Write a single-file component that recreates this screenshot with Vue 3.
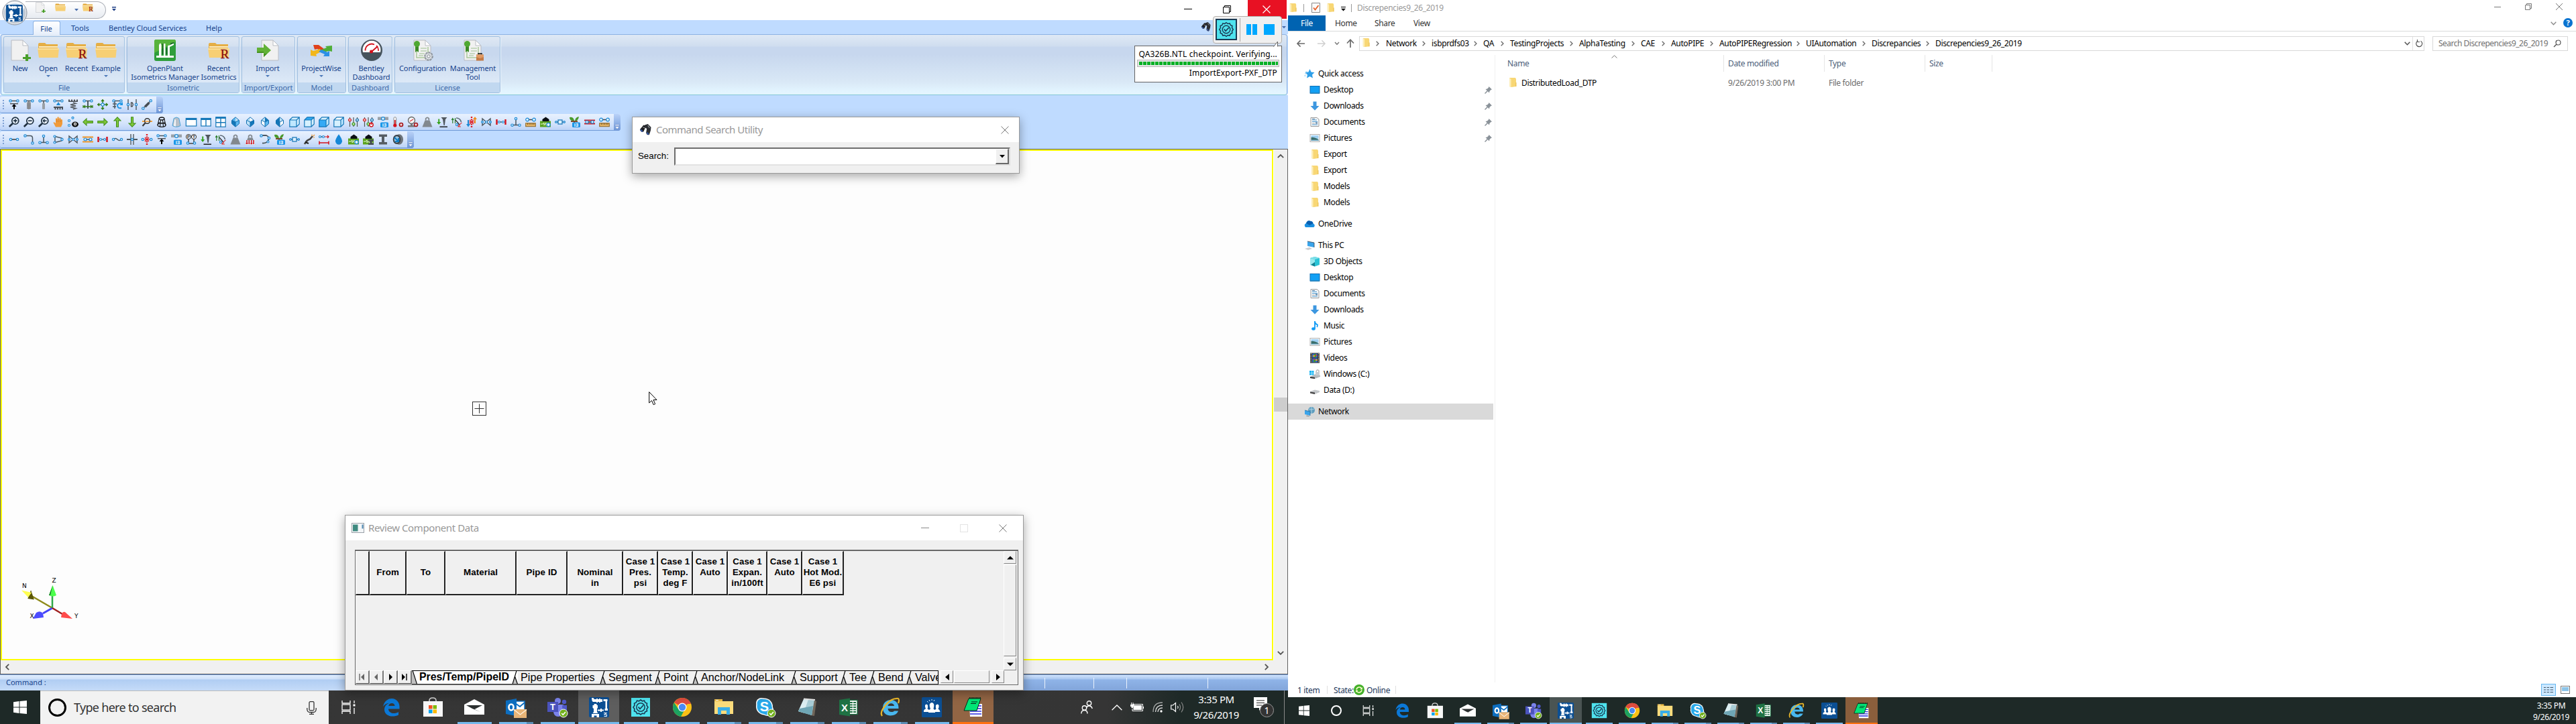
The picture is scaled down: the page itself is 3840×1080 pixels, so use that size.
<script setup>
const ring = (x, y, r = 1.7) =>
  `<circle cx="${x}" cy="${y}" r="${r}" fill="#e3f5ff" stroke="#1e8ad6" stroke-width="1.2"/>`
const ln = (d, c = '#4a565f', w = 1.5) => `<path d="${d}" fill="none" stroke="${c}" stroke-width="${w}"/>`
const fl = (d, c = '#4a565f') => `<path d="${d}" fill="${c}"/>`
const tx = (t, x, y, s, c, extra = '') =>
  `<text x="${x}" y="${y}" font-size="${s}" fill="${c}" text-anchor="middle" font-weight="bold" font-family="Liberation Sans, sans-serif" ${extra}>${t}</text>`

const pipeTop = ln('M2 2.5H14') + ring(2.6, 2.5) + ring(13.4, 2.5)
const cube = (top, front, side) =>
  `<path d="M.8 5 5 .8H15.2L11 5Z" fill="${top}"/><path d="M.8 5H11V15.2H.8Z" fill="${front}"/><path d="M11 5 15.2.8V11L11 15.2Z" fill="${side}"/>` +
  ln('M.8 5 5 .8H15.2V11L11 15.2H.8ZM.8 5H11V15.2M11 5 15.2.8', '#1477b8', 1.2)
const iso = (a, b, c, d) =>
  fl('M8 .8 13 8 8 15.2 3 8Z', '#fff') + fl('M8 .8 3 5.5 8 8Z', a) + fl('M8 .8 13 5.5 8 8Z', b) +
  fl('M3 5.5 8 8V15.2L3 10.5Z', c) + fl('M13 5.5 8 8V15.2L13 10.5Z', d) +
  ln('M8 .8 13.5 5.5V10.5L8 15.2 2.5 10.5V5.5ZM8 8V15M8 8 3 5.5M8 8l5-2.5', '#0c6cb0', 1)
const mag = (inner) =>
  `<circle cx="9.8" cy="6.2" r="5" fill="#eaf3ff" stroke="#1f3040" stroke-width="1.7"/>` + ln('M6 10 .8 15', '#1f3040', 2.6) + inner
const info = '<rect x="4" y="8.5" width="12" height="7.5" rx="1.5" fill="#1d96e8"/>' + tx('i3', 10, 15, 7.5, '#fff')
const weight = fl('M4.5 5.5H11.5L15.5 15.5H.5Z', '#82888e') + ln('M5.7 5.5V2.8Q8-.2 10.3 2.8V5.5', '#82888e', 1.8)
const nail = fl('M6.5 1H15.5L13 4 11.8 13H10.5L9 4Z', '#51585f') + ln('M4.5 15.2H16', '#111', 1.4) + fl('M2.3 3.5H4.2V8H6.2L3.2 12 .2 8H2.3Z', '#35a11c')
const wheel = ln('M1.8 10V3M.2 5 1.8 2.6 3.4 5M5.5 10V2', '#287d28', 1.2) + ln('M7 2Q13 2 14.5 8', '#596670', 1.6) + ln('M6 5 12 12', '#333', 1.3) + ln('M15.5 9Q13 10 11 15M10 11v4h4', '#d33', 1.2) + ring(8, 12, 1.6)
const valve = ln('M2 3V13L14 3V13Z', '#4a565f', 1.4) + ring(2, 8, 1.4) + ring(14, 8, 1.4) + ring(8, 8, 1.5)
const flange = ln('M3 8H13', '#555', 1.3) + ln('M1.5 4V12M14.5 4V12', '#d3121c', 2.4) + ring(5, 8, 1.5) + ring(11, 8, 1.5)
const tee = ln('M2 12.5H14M8 12V4') + ring(8, 3) + ring(2.5, 12.7) + ring(13.5, 12.7)
const ruler = ln('M3 4.5H13', '#444') + ring(3, 4.5, 2.3) + ring(13, 4.5, 2.3) + '<rect x=".7" y="9.7" width="14.6" height="5" fill="#e2b468" stroke="#8a6425"/>' + ln('M3.5 10v2M6 10v2M8.5 10v2M11 10v2M13 10v2', '#6a4715', .8)
const house = '<rect y="6.5" width="16" height="9" fill="#5ba31f"/>' + fl('M3.5 7V4L8.5.5 13.5 4V7Z', '#0b0f14') + ln('M1 11h3l2-2v4l3-4v4h6', '#e9f7dc', 1)
const pbox = ln('M0 8H16') + '<rect x="5" y="5" width="6" height="6" fill="#dff1ff" stroke="#1e7ab8" stroke-width="1.3"/>' + ring(2, 8, 1.3) + ring(14, 8, 1.3)
const plant = fl('M0 1Q6 0 7 6H5Q0 6 0 1ZM14 0Q8 1 8 7Q13 6 14 0Z', '#4a9a2c') + ln('M2 7H12M7 7V12', '#7a4a2a', 1.8) + info
const bigInfo = '<rect y=".5" width="16" height="4.5" fill="#9aa1a8"/>' + ring(8, 3, 2.4) + info
const sliders = ln('M2.5 1V15M8 1V15M13.5 1V15', '#555', 1.2) +
  '<circle cx="2.5" cy="5" r="2" fill="#fbb" stroke="#c22" stroke-width="1.2"/><circle cx="8" cy="11" r="2" fill="#bdf5a0" stroke="#3a8a20" stroke-width="1.2"/><circle cx="13.5" cy="5" r="2" fill="#bde" stroke="#1e6fa8" stroke-width="1.2"/>'
const redO = '<circle cx="13" cy="12" r="2.5" fill="#f4dede" stroke="#a3161c" stroke-width="1.7"/>'
const reddots = ln('M8 0V16', '#e0161c', 2.4).replace('/>', ' stroke-dasharray="2 1.5"/>') + ln('M3 8H13M5 5l6 6M11 5l-6 6', '#e0161c', 1.2)
const arrow = (rot) => `<g transform="rotate(${rot} 8 8)">` + fl('M0 8 6.5 1.8V6H15.8V10H6.5V14.2Z', '#3d8a14') + fl('M1.4 8 5.6 4V7H14.8V9H5.6V12Z', '#7fc63c') + '</g>'
const zig = (y) => `M8 ${y}l4 1.4-8 1.8 8 1.8-8 1.8 8 1.8-4 1.4`

const glyphs = {
  support: pipeTop + ln('M2 6.8H14', '#111', 1) + fl('M8 7 4.5 11H7V15H9V11H11.5Z', '#000'),
  spring: pipeTop + ln('M5 5.5h6M5 7.5h6M5 9.5h6M5 11.5h6M5 13.5h6', '#777', 1.4) + ln('M8 3V15', '#888', 2),
  rod: pipeTop + ln('M8 3V7', '#555') + '<rect x="6" y="6" width="4" height="9" rx="1" fill="#9a9fa4"/>',
  base: pipeTop + fl('M8 4 4.8 9H11.2Z', '#1e8ad6') + fl('M1 11H15V15.5H13V13H11.5V15.5H9.5V13H8V15.5H6V13H4.5V15.5H2.5V13H1Z', '#4a4f55'),
  springtop: fl('M1 0.5H3V2.5H5V.5H7V2.5H9V.5H11V2.5H13V.5H15V4H1Z', '#4a4f55') + ln(zig(5), '#5a6066', 1.6),
  teearr: pipeTop + ln('M8 3V14', '#4a565f', 2) + ln('M1 11H15M1 9v4M15 9v4M4 9l-2 2 2 2M12 9l2 2-2 2', '#357f1c', 1.3),
  cross: ln('M8 0V16M0 8H16M6 3l2-2 2 2M6 13l2 2 2-2M3 6 1 8l2 2M13 6l2 2-2 2', '#357f1c', 1.5) + ring(8, 8, 2.2),
  rotate: pipeTop + ln('M4 3V14M1 7h6M1 11h5') + ln('M14.5 7Q10 4.500 8 9Q8.500 14.500 14 13', '#1e96e6', 2) + fl('M16 4V9H11Z', '#1e96e6'),
  damper: ln('M2 0V16M14 0V16', '#4a565f', 1.4) + ring(2, 8) + ring(14, 8) + ln('M6.500 5V11H8Q10.500 8 8 5Z', '#333', 1.2),
  diag: ln('M2 14 14 2') + fl('M4 10 10 4 12.500 6.500 6.500 12.500Z', '#454d54') + ring(2.300, 13.700) + ring(13.700, 2.300),
  zoomin: mag(ln('M7 6.200h5.600M9.800 3.400v5.600', '#1f3040', 1.7)),
  zoomout: mag(ln('M7 6.200h5.600', '#1f3040', 1.7)),
  zoomprev: mag(ln('M7 6.200h5.600M9.500 4 7.500 6.200l2 2.200', '#1f3040', 1.5)),
  hand: fl('M4 15.500 0.500 9Q1 7.500 3 9L4 10V3Q5 1.500 6 3V7.500L6.500 1Q7.700-.5 8.700 1V7.500L9.500 2Q10.700 1 11.500 2.500V8L12.200 4Q13.500 3.500 14 5V11L12 15.500Z', '#f09a3a') + ln('M6 4v4M8.700 3v5M11.500 4v4', '#c96d10', .6),
  eye: ring(2, 6, 1.500) + ring(7.500, 1.800, 1.500) + ring(2, 13, 1.500) + '<ellipse cx="11" cy="11.500" rx="5" ry="4" fill="#111"/><circle cx="11" cy="11" r="2.200" fill="#fff"/><circle cx="11" cy="11" r="1.100" fill="#111"/>',
  left: arrow(0), right: arrow(180), up: arrow(90), down: arrow(270),
  magpipe: ln('M1 7H16', '#f09628', 1.800) + '<circle cx="8.500" cy="6.500" r="3.800" fill="#eaf3ff" stroke="#333" stroke-width="1.500"/>' + ln('M5.500 9.500 1.500 14', '#333', 2) + ln('M5.500 7h6', '#f09628', 1.500),
  wirecyl: '<ellipse cx="8" cy="3" rx="3.800" ry="2" fill="none" stroke="#111" stroke-width="1.300"/><ellipse cx="8" cy="12.500" rx="6" ry="2.800" fill="none" stroke="#111" stroke-width="1.300"/>' + ln('M4.200 3 2 12.500M11.800 3 14 12.500M6.500 4.800 5.500 15M9.500 4.800l1 10M3 8.500q5 3 10 0', '#111', 1.100),
  solidcyl: '<path d="M4.200 2.500Q8-.5 11.800 2.500L14 13.500Q8 17 2 13.500Z" fill="#b9c0c8" stroke="#4aa3d8"/>' + fl('M5.500 4 4 13.500Q5.500 14.500 7 14.500V4.500Z', '#f3f6f8'),
  win1: '<rect x=".3" y="2.500" width="15.500" height="11.500" fill="#fff" stroke="#1477b8" stroke-width="1.200"/>' + fl('M0 2H16V5H0Z', '#1477b8'),
  win2: '<rect x=".8" y="2.500" width="14.400" height="11.500" fill="#fff" stroke="#1477b8" stroke-width="1.200"/>' + fl('M.5 2H15.500V5H.5ZM7.300 5H8.700V14H7.300Z', '#1477b8'),
  win4: '<rect x=".8" y=".8" width="14.400" height="14.400" fill="#fff" stroke="#1477b8" stroke-width="1.200"/>' + fl('M.5.5H15.500V3H.5ZM7.300 3H8.700V15H7.300ZM1 8H15V9.500H1Z', '#1477b8'),
  isoA: iso('#5db7ee', '#bfe3f8', '#1477b8', '#5db7ee'), isoB: iso('#bfe3f8', '#fff', '#bfe3f8', '#1477b8'),
  isoC: iso('#bfe3f8', '#1477b8', '#fff', '#5db7ee'), isoD: iso('#1477b8', '#bfe3f8', '#1477b8', '#fff'),
  cubeA: cube('#d6f1ff', '#bfe8ff', '#d6f1ff'), cubeB: cube('#2fa8f0', '#d6f1ff', '#d6f1ff'),
  cubeC: cube('#d6f1ff', '#35aaf5', '#bfe8ff'), cubeD: cube('#fff', '#d6f1ff', '#bfe8ff'),
  sliders, sliderspw: sliders + '<circle cx="12.500" cy="12.300" r="2.700" fill="#fff" stroke="#d01820" stroke-width="1.500"/>' + ln('M12.500 8v4', '#d01820', 1.400),
  bigInfo, thermo: '<rect x="2" y=".7" width="3.600" height="11" rx="1.800" fill="#fff" stroke="#888"/><circle cx="3.800" cy="13" r="2.600" fill="#d3121c"/>' + ln('M3.800 5V12', '#d3121c', 1.800) + redO,
  gauge: '<circle cx="6.500" cy="5.500" r="5" fill="#f4f6f7" stroke="#666" stroke-width="1.300"/>' + ln('M4 7 9 4', '#d33', 1.200) + fl('M5 11h3v2h3v2.500H1V13h4Z', '#777') + redO,
  weight, nail, wheel,
  dyn: reddots + fl('M2 5H4V11H6L3 15.500 0 11H2Z', '#1e8ad6') + fl('M13 0 16 4H14V10H12V4H10Z', '#f08a1c'),
  valve, flange, tee, ruler, house: house + ring(12.500, 12, 2.600), pbox, plant,
  redpipe: ln('M0 5.500H16M0 10.500H16', '#c82028', 2) + ln('M3 8H13', '#333') + ring(4, 8, 2) + ring(12, 8, 2),
  pipe: ln('M1 8H15', '#555', 1.800) + ring(3, 8) + ring(13, 8),
  elbow: ln('M3 2.500H10Q13.500 2.500 13.500 6V13') + ring(2.500, 2.500) + ring(13.500, 13.500),
  reducer: ln('M3 3.500V12.500L13 10V6Z', '#4a565f', 1.400) + ring(2.500, 3.500, 1.500) + ring(2.500, 12.500, 1.500) + ring(13.500, 8, 1.600),
  bellow: ln('M0 4.500H16M0 11.500H16', '#f09628', 2) + ln('M2 8H14') + ring(4, 8, 2) + ring(12, 8, 2),
  tilde: ln('M2 8Q5 5 8 8T14 8') + ring(2, 8, 1.600) + ring(14, 8, 1.600),
  greycross: ln('M6 0V16M10 0V16', '#7b858d', 2) + ln('M0 8H16', '#4a565f', 2) + ring(8, 8, 1.600),
  reddots: reddots + ring(1.800, 8) + ring(14.200, 8),
  pt: '<circle cx="4" cy="4" r="3.600" fill="#eef3f8" stroke="#333"/><circle cx="12" cy="4" r="3.600" fill="#eef3f8" stroke="#333"/>' + tx('P', 4, 6.300, 6, '#222') + tx('T', 12, 6.300, 6, '#222') + ln('M4 8v6M12 8v6M4 14h8', '#444') + ring(3, 13.500) + ring(13, 13.500),
  weightred: weight + fl('M1 9H15V16H1Z', '#dbe7f5') + ln('M3 9v6M6.300 9v6M9.700 9v6M13 9v6', '#d3121c', 1.500) + ln('M1.500 13l1.500 2 1.500-2M8 13.500l1.700 1.700 1.500-2', '#d3121c', 1),
  bend: ln('M3 2H10Q15 4 13 9Q11 14 4 13.500', '#4a565f', 1.800) + ring(2.500, 2.500) + ring(14, 6) + ring(12.500, 11.500, 1.500),
  pen: ln('M1 15Q4 9 9 7.500L13 3', '#444', 2.600) + ln('M2 12l5 2', '#222', 2.400) + ln('M12 3V.5M14 3l2-2M14 5h2', '#f09628', 1.100),
  rulerred: ln('M1 4H8', '#555') + ring(2, 4, 1.500) + ring(7, 4, 1.500) + ln('M9 4h6M13 2l2 2-2 2', '#d3121c', 1.200) + ln('M.5 13H15.500M1 10.500v5M15 10.500v5', '#d3121c', 1.500),
  drop: fl('M8 .3Q13.500 8 13 11Q12 15.700 8 15.700T3 11Q2.500 8 8 .3Z', '#1688d8'),
  houseI: house + fl('M8 8H16V10.500H13.500V13.500H16V16H8V13.500H10.500V10.500H8Z', '#444b52'),
  ibeam: fl('M2 .5H14V4H10V12H14V15.500H2V12H6V4H2Z', '#565d64'),
  disc: '<ellipse cx="10" cy="8" rx="6" ry="7.700" fill="#6d747b"/><ellipse cx="6.500" cy="8" rx="5.800" ry="7" fill="#3c4349"/><ellipse cx="6.500" cy="8" rx="3.800" ry="4.800" fill="#9cc8e6"/>' + ln('M3 5 9 11M9 6V11H4', '#0c7cc4', 2.200)
}
const row1 = 'support spring rod base springtop teearr cross rotate damper diag'.split(' ')
const row2 = 'zoomin zoomout zoomprev hand eye left right up down magpipe wirecyl solidcyl win1 win2 win4 isoA isoB isoC isoD cubeA cubeB cubeC cubeD sliders sliderspw bigInfo thermo gauge weight nail wheel dyn valve flange tee ruler house pbox plant redpipe ruler'.split(' ')
const row3 = 'pipe elbow tee reducer valve bellow flange tilde greycross reddots support bigInfo pt nail wheel weight weightred bend plant pbox pen rulerred drop house houseI ibeam disc'.split(' ')
const toolbars = [row1, row2, row3]

/* 32px ribbon icons */
const folder = fl('M1 7Q1 5 3 5H11L13 7H30V16H1Z', '#e5ae45') + fl('M0 13H32L30.500 27H2Z', '#f7cf74') + fl('M2 10H30V12H2Z', '#fdecc0') + fl('M0 13H32V15H0Z', '#fbdf9b')
const bigR = `<text x="25" y="28" font-size="19" fill="#8a0f0f" stroke="#8a0f0f" stroke-width=".4" text-anchor="middle" font-family="Liberation Serif, serif">R</text>`
const page = '<path d="M3 1H20L28 9V31H3Z" fill="#f1f1f1" stroke="#b9bcc2"/><path d="M20 1V9H28Z" fill="#fff" stroke="#b9bcc2"/>'
const cert = page + ln('M7 5V27H24V11', '#a9c79b', 1.500) + fl('M5 13V19L7.500 17 10 19V9H5Z', '#3c8a28') + '<circle cx="7.500" cy="6.500" r="4.500" fill="#4fa832"/>' + ln('M13 13h9M13 17h9M11 21h8M10 24h7', '#9cbf90', 1)
const big = {
  new: page + fl('M24 22H28V26H32V29H28V32H24V29H20V26H24Z', '#4a9f2a'),
  folder, folderR: folder + bigR,
  plant: '<rect width="32" height="32" rx="3" fill="#2f9e3c"/>' + fl('M0 3Q0 0 3 0H29Q32 0 32 3L0 20Z', '#57b33c') + fl('M7 24V8L9 5 10.500 8V24ZM14 24V6H16.500V24ZM20 24V10Q20 8 23 8.500L29 5.500V8L23 11V24ZM3 24H29V27H3Z', '#fff') + ln('M12.500 6V22M18.500 12V22M24 6l5-1', '#175f24', 1.500),
  import: '<g transform="translate(4 0)">' + page + '</g>' + fl('M0 12H10V6L21 16 10 26V20H0Z', '#62b136') + fl('M0 18H10V21L15 21 10 26V20H0Z', '#44911f'),
  pw: fl('M4 8H12L20 14 18 18 10 14 6 15Z', '#e0401a') + fl('M0 24V15L4 17 14 14 16 18 8 22 9 25Z', '#f3b71a') + fl('M32 9V18L28 17 18 19 14 16 24 12 22 10Z', '#4fae36') + fl('M28 25H19L21 22 12 18 16 15 25 19 28 17Z', '#2a8fe6'),
  gauge: '<circle cx="16" cy="16" r="16" fill="#46535c"/><path d="M3 19A13.500 13.500 0 1 1 29 19Z" fill="#fff"/>' + ln('M6.500 16.500A9.500 9.500 0 0 1 20 7.500', '#d3121c', 1.800) + ln('M23 9A10 10 0 0 1 26 17', '#d3121c', 1.600) + ln('M16 18 25 10', '#d3121c', 2) + '<circle cx="15.500" cy="18" r="2.500" fill="#d3121c"/>',
  config: cert + '<circle cx="25" cy="25" r="6" fill="#d5d9dd" stroke="#858c94" stroke-width="1.500" stroke-dasharray="3 1.500"/><circle cx="25" cy="25" r="5" fill="#dfe2e6" stroke="#9aa1a8"/><circle cx="25" cy="25" r="2.200" fill="#f5f6f7" stroke="#858c94"/>',
  mgmt: cert + '<rect x="21" y="22.500" width="11" height="9" fill="#c47a45"/>' + fl('M21 22.500H32V26L26.500 28 21 26Z', '#e09a63') + ln('M24 22V21H29V22', '#111', 1.500)
}
const groups = [
  { name: 'File', w: 181, items: [{ t: 'New', i: 'new', w: 42 }, { t: 'Open', i: 'folder', w: 42, a: 1 }, { t: 'Recent', i: 'folderR', w: 42 }, { t: 'Example', i: 'folder', w: 46, a: 1 }] },
  { name: 'Isometric', w: 168, items: [{ t: 'OpenPlant', t2: 'Isometrics Manager', i: 'plant', w: 106 }, { t: 'Recent', t2: 'Isometrics', i: 'folderR', w: 54 }] },
  { name: 'Import/Export', w: 80, items: [{ t: 'Import', i: 'import', w: 76, a: 1 }] },
  { name: 'Model', w: 73, items: [{ t: 'ProjectWise', i: 'pw', w: 70, a: 1 }] },
  { name: 'Dashboard', w: 66, items: [{ t: 'Bentley', t2: 'Dashboard', i: 'gauge', w: 62 }] },
  { name: 'License', w: 158, items: [{ t: 'Configuration', i: 'config', w: 76 }, { t: 'Management', t2: 'Tool', i: 'mgmt', w: 74 }] }
]

/* 30px application icons */
const gearD = 'M15 4l2.500 1.800 3-.6 1.200 2.800 2.800 1.200-.4 3L26 15l-1.900 2.700.4 3-2.800 1.200-1.200 2.800-3-.6L15 26l-2.500-1.900-3 .6-1.200-2.800-2.800-1.200.4-3L4 15l1.900-2.800-.4-3 2.800-1.200L9.500 5.200l3 .6Z'
const gear = '<rect x="1" y="1" width="28" height="28" fill="#4fe3ee"/>' + ln(gearD, '#1b3a54', 1.600) + '<circle cx="15" cy="15" r="6.200" fill="none" stroke="#1b3a54" stroke-width="1.500"/>' + ln('M11.500 14.500 14 17.500 19 12', '#1b3a54', 1.800)
const autopipe = '<rect width="30" height="30" rx="2" fill="#0b4f94"/>' +
  fl('M4 1H6.500L8 3H11V2H13V3H15V2H17V3H20V7H17V8H15V7H13V8H11V7H6Q4 6 4 1ZM21.500 3H27.500V6H21.500ZM24.500 6H27V18H24.500ZM23.500 17H28V20H23.500ZM17 17H19V22H17ZM19 18.500H22V20.500H19ZM13 18.500H17V20.500H13ZM7.500 10H11.500V12H13V16L12 17V22L13.500 24H5.500L7 22V17L5.500 16V12H7.500ZM4 25H15V30H11.500V27.500H7.500V30H4Z', '#fff') + ln('M22 23.500h4.500l-4 2.500h4v2.500h-4', '#fff', 1)
const ok = (x, y) => `<circle cx="${x}" cy="${y}" r="6" fill="#72b01d" stroke="#fff" stroke-width="1"/>` + ln(`M${x - 2.800} ${y}l2 2.200 3.800-4.200`, '#fff', 1.600)
const apps = {
  task: ln('M4 5V9H16V5M4 25V21H16V25', '#fff', 1.300) + '<rect x="4" y="11" width="12" height="8" fill="none" stroke="#fff" stroke-width="1.300"/>' + ln('M22 5V9M22 16V25', '#fff', 1.300) + fl('M20.500 10.500H23.500V13.500H20.500Z', '#fff'),
  edge: fl('M3 14C5 5 11 2 16 2C23 2 27.500 8 27.500 14V17.500H11C11 24 20 26 26 22V26.500C17 31 5 28 5 18.500C5 13 9 9.500 13 8.500C8 9 5 11 3 14ZM11.200 13H20.500C20.500 7.500 12 7.500 11.200 13Z', '#0b78d7'),
  store: ln('M10 7V5Q10 1 15 1T20 5V7', '#d8d8d8', 1.500) + fl('M1 6H30V29H1Z', '#f7f7f7') + fl('M9 12H14.500V17.500H9Z', '#f25022') + fl('M15.500 12H21V17.500H15.500Z', '#7fba00') + fl('M9 18.500H14.500V24H9Z', '#00a4ef') + fl('M15.500 18.500H21V24H15.500Z', '#ffb900'),
  mail: fl('M0 11 15 3 30 11V26H0Z', '#fff') + fl('M3 12H27L15.500 18 24 22 12 17Z', '#2b2f2f'),
  outlook: '<rect x="13" y="6" width="15" height="13" fill="#fff" stroke="#0d6ec0" stroke-width="1.500"/>' + ln('M14 9l7 5 7-6', '#0d6ec0', 2) + fl('M0 5 16 2V28L0 25Z', '#0d6ec0') + '<ellipse cx="8" cy="15" rx="3.500" ry="4.500" fill="none" stroke="#fff" stroke-width="2.600"/>' + fl('M12 18H31V31H12Z', '#e8b477') + ln('M12 18.500 21.500 26 31 18.500', '#fff3e2', 1.300),
  teams: '<circle cx="15.500" cy="5.500" r="4.500" fill="#7b83eb"/><circle cx="25" cy="7" r="3.200" fill="#5059c9"/>' + fl('M10 11H24V22Q22 29 16 29T9 22Z', '#7b83eb') + fl('M22 12H29V21Q28 25 23 24Z', '#5059c9') + fl('M0 7H16V22H0Z', '#4b53bc') + tx('T', 8, 19, 13, '#fff') + ok(24, 24),
  pipe: autopipe, gear,
  chrome: '<circle cx="15" cy="15" r="14" fill="#fbc116"/><path d="M15 15 2.900 8A14 14 0 0 1 27.100 8Z" fill="#dd4b3e"/><path d="M15 1A14 14 0 0 1 28 10H15Z" fill="#dd4b3e"/><path d="M2.900 8A14 14 0 0 0 13 28.900L19 18 9.500 18Z" fill="#1ca261"/><circle cx="15" cy="15" r="6.500" fill="#fff"/><circle cx="15" cy="15" r="5.200" fill="#4a8af4"/>',
  files: fl('M1 3H13V7H1Z', '#e8b843') + fl('M1 6H29V25H1Z', '#fbdc7c') + fl('M3 4H7V5H3Z', '#fff') + fl('M6 15H24V26H19V20H11V26H6Z', '#3aaee8'),
  skype: '<circle cx="9" cy="9" r="8" fill="#fff"/><circle cx="18" cy="19" r="9" fill="#fff"/><circle cx="13.500" cy="14" r="12.500" fill="#fff"/><circle cx="9.500" cy="9.500" r="7" fill="#28a8ea"/><circle cx="17.500" cy="18.500" r="8" fill="#28a8ea"/><circle cx="13.500" cy="14" r="11" fill="#28a8ea"/>' + tx('S', 13.500, 21, 20, '#fff') + ok(24, 24),
  notes: fl('M24 4 29 6 26 28 20 27Z', '#70665a') + fl('M10 3 26 4 22 27 2 21Z', '#a9cdd6') + fl('M10 3 17 3.500 10 23.500 2 21Z', '#dceef2') + fl('M4 17 24 13 22 27 2 21Z', '#6fa6b5') + ln('M10 2.500 27 4', '#e8e8e8', 2),
  excel: '<rect x="14" y="4.500" width="14" height="21" fill="#fff" stroke="#1f7244" stroke-width="1.300"/>' + ln('M17 8H26M17 11.500H26M17 15H26M17 18.500H26M17 22H26', '#1f7244', 1.800) + ln('M21.500 5v20', '#fff', 1) + fl('M1 4 17 1.500V28.500L1 26Z', '#1f7244') + tx('X', 9, 20.500, 15, '#fff'),
  ie: fl('M4 16C4 8 10 4 16 4C23 4 28 9 27.500 17H11.500C12 23 19 23 21 20.500H27C24 30 4 31 4 16ZM11.500 13H21C20.500 8 12.500 8 11.500 13Z', '#49b7ee') + ln('M3 28Q-1 23 8 12T27 2Q29 4 27 9', '#eab72a', 2.200),
  people: '<rect width="30" height="30" rx="1.500" fill="#0b4f94"/>' + fl('M3 21Q3 18 6 17.500 4.500 14 5 12Q7 9 9 12 9.500 15 8.500 17.500L11 19 13 17.500Q11 12 12 10 15 6 18 10 19 13 17.500 17.500L19.500 19 21.500 17.500Q20.500 15 21 12 23.500 9 25.500 12 26 15 24.500 17.500 27 18.500 27.500 22H20V23H10V22H3Z', '#fff') + ln('M15 3v2M11 4l1 2M19 4l-1 2M8 6l1.500 1.500', '#fff', .9),
  green: fl('M9 10H28V29H10Z', '#fff') + ln('M16 13H27M16 17H27M10 21H27M10 25H27', '#2b2be0', 1.600) + '<path d="M8 2H26L20 20H1Z" fill="#00e676" stroke="#06281a"/>' + ln('M12 7h9M11 9.500h8', '#06281a', 1) + ln('M9 1h18', '#06281a', 2).replace('/>', ' stroke-dasharray="1 1"/>')
}
const taskItems = [
  { i: 'task' }, { i: 'edge' }, { i: 'store' }, { i: 'mail', on: 1 }, { i: 'outlook', on: 2 }, { i: 'teams', on: 1 }, { i: 'pipe', on: 1, act: 1 }, { i: 'gear', on: 1 },
  { i: 'chrome', on: 1 }, { i: 'files', on: 2 }, { i: 'skype', on: 2 }, { i: 'notes', on: 2 }, { i: 'excel', on: 2 }, { i: 'ie', on: 2 }, { i: 'people', on: 1 }, { i: 'green', alert: 1 }
]

/* 16px file explorer icons */
const ex = {
  folder: fl('M3 1H12L13 3V14L6 15 3 14Z', '#f8d775') + fl('M3 1 5.500 3V15L3 14Z', '#fdeeb9') + fl('M12 8h1.500v6H12Z', '#eec55a'),
  star: fl('M8.500 1 10.600 5.500 15.500 6 12 9.500 13 14.500 8.500 12 4 14.500 5 9.500 1.500 6 6.400 5.500Z', '#2f9fe8') + ln('M1 8h3M0 11h3M2 5h3', '#8fd0f5', 1),
  desktop: '<rect x="1" y="2.500" width="14" height="10.500" fill="#12a0f4" stroke="#0d6fb5" stroke-width="1"/>' + fl('M1 12.200H15V13.800H1Z', '#2a86bd'),
  down: fl('M5.500 1.500H10.500V8H14.500L8 14.800 1.500 8H5.500Z', '#3d97e0'),
  doc: '<path d="M2 1.500H11L14 4V14.500H2Z" fill="#f6f8f9" stroke="#9a9a9a"/>' + ln('M4 5h7M4 7.500h8M4 12h8', '#4a97cf', 1) + fl('M9 8.500h3v2H9ZM4 3h4v1H4Z', '#5a7fa0') + ln('M4 10h4', '#aaa', 1),
  pic: '<rect x="1" y="2.500" width="14" height="11" fill="#fff" stroke="#b0b0b0"/>' + fl('M2.500 4H13.500V9H2.500Z', '#9fd0f3') + fl('M2.500 7Q6 6 13.500 10V12H2.500Z', '#3b6e6a') + fl('M2.500 10.500H13.500V12H2.500Z', '#6ca4c0'),
  cloud: fl('M2 13Q-1 9 3 7Q5 1.500 10 4Q13 4 13.500 7.500Q17 9 15 12.500L14 13Z', '#1a8fe0') + fl('M3 7Q5 1.500 10 4Q13 4 13.500 7.500L8 10Z', '#0a5fb0'),
  pc: fl('M5 2 15 4V11L5 9Z', '#3aa4ea') + ln('M5 2 15 4V11', '#345', .8) + fl('M1 13 8 11 12 13 6 15Z', '#c9ccd0'),
  cube3: fl('M1 3 8 1 15 3V13L8 15.500 1 13Z', '#29c3d6') + fl('M1 3 8 5V15.500L1 13Z', '#9be8ee') + fl('M1 3 8 1 15 3 8 5Z', '#7fdfe8') + fl('M8 9V15.500L2 13Z', '#137f90'),
  music: ln('M8 1V12', '#119af5', 1.800) + '<ellipse cx="6" cy="12.500" rx="2.800" ry="2.200" fill="#119af5"/>' + ln('M8 2Q8.500 5 12 6.500Q12 9 11 10', '#119af5', 1.700),
  video: fl('M1 .5H15V15.500H1Z', '#333') + ln('M2.300 1V15M13.700 1V15', '#ddd', 1.200).replaceAll('/>', ' stroke-dasharray="1.200 1.200"/>') + fl('M4 1.500H12V7.500H4ZM4 8.500H12V14.500H4Z', '#3568c4') + fl('M7 2h3v5H7ZM6 11h3v3H6Z', '#3c9a38') + fl('M5 4h3v2H5ZM9 10h3v2H9Z', '#e0a020') + fl('M9 3h2v2H9ZM6 9.500h2v1.500H6Z', '#d33'),
  cdrive: fl('M0 3H3V6H0ZM3.500 3H6.500V6H3.500ZM0 6.500H3V9.500H0ZM3.500 6.500H6.500V9.500H3.500Z', '#18b4f2') + fl('M1 12 9 8 16 10V12L8 15 1 14Z', '#b5b9bd') + fl('M1 12 8 13V15L1 14Z', '#333') + ln('M10 7V4Q12 0 14 3V5', '#bbb', 1.500) + fl('M9 5H15V10H9Z', '#c8ccd0'),
  ddrive: fl('M1 10 8 7.500 15 9V11L8 14 1 12.500Z', '#c4c7ca') + fl('M1 10.500 8 11.500V14L1 12.500Z', '#444'),
  net: '<circle cx="11" cy="6" r="5" fill="#5f9ebf"/>' + ln('M7 4q4 2 8 0M11 1v10', '#bcdcea', .8) + fl('M1 6 9 8V14L1 12Z', '#3aa4ea') + ln('M1 6 9 8V14', '#2b6f9f', .8) + fl('M4 13.500 8 14.500V15.500L3 15Z', '#999')
}
const tree = [
  { t: 'Quick access', i: 'star', root: 1 }, { t: 'Desktop', i: 'desktop', pin: 1 }, { t: 'Downloads', i: 'down', pin: 1 }, { t: 'Documents', i: 'doc', pin: 1 }, { t: 'Pictures', i: 'pic', pin: 1 },
  { t: 'Export', i: 'folder' }, { t: 'Export', i: 'folder' }, { t: 'Models', i: 'folder' }, { t: 'Models', i: 'folder' },
  { t: 'OneDrive', i: 'cloud', root: 1 }, { t: 'This PC', i: 'pc', root: 1 }, { t: '3D Objects', i: 'cube3' }, { t: 'Desktop', i: 'desktop' }, { t: 'Documents', i: 'doc' },
  { t: 'Downloads', i: 'down' }, { t: 'Music', i: 'music' }, { t: 'Pictures', i: 'pic' }, { t: 'Videos', i: 'video' }, { t: 'Windows (C:)', i: 'cdrive' }, { t: 'Data (D:)', i: 'ddrive' },
  { t: 'Network', i: 'net', root: 1, sel: 1 }
]
const crumbs = [['Network', 68], ['isbprdfs03', 77], ['QA', 40], ['TestingProjects', 103], ['AlphaTesting', 92], ['CAE', 45], ['AutoPIPE', 72], ['AutoPIPERegression', 129], ['UIAutomation', 98], ['Discrepancies', 95], ['Discrepencies9_26_2019', 140]]
const gridCols = [['', 21], ['From', 55], ['To', 58], ['Material', 106], ['Pipe ID', 76], ['Nominal\nin', 83], ['Case 1\nPres.\npsi', 52], ['Case 1\nTemp.\ndeg F', 52], ['Case 1\nAuto', 52], ['Case 1\nExpan.\nin/100ft', 59], ['Case 1\nAuto', 52], ['Case 1\nHot Mod.\nE6 psi', 62]]
const sheetTabs = [['Pres/Temp/PipeID', 150], ['Pipe Properties', 131], ['Segment', 82], ['Point', 56], ['Anchor/NodeLink', 147], ['Support', 74], ['Tee', 43], ['Bend', 55], ['Valve', 40]]
const binoc = fl('M.5 7.500 5.500 1.500 8.500 2.500 7.500 6 5.500 10.500Q1.500 12.500.5 7.500Z', '#1d1f22') + fl('M7 1.500 11.500 0 16 4.500 15.500 9 13.500 15Q10.500 16.500 9 12.500L10 6.500 7.500 5Z', '#2b2e33') + fl('M1 7.500Q4 7.500 4.500 11 1.500 11.500 1 7.500ZM9.700 11.500Q12.500 11.500 13 15 10 15.500 9.700 11.500Z', '#3558a8') + ln('M4.500 4.500l2.500 1M11.500 2l2.500 3.500', '#9a9da2', 1)
const winLogo = 'M0 2.300 8.500 1.100V9.500H0ZM9.500 1 20 0V9.500H9.500ZM0 10.500H8.500V18.900L0 17.700ZM9.500 10.500H20V20L9.500 19Z'
</script>

<template>
  <div class="desktop">
    <section class="left">
      <header class="titlebar">
        <div class="qat">
          <svg class="q1" viewBox="0 0 32 32" v-html="big.new"></svg>
          <svg class="q2" viewBox="0 0 32 32" v-html="big.folder"></svg>
          <svg class="tri" viewBox="0 0 6 4"><path d="M0 0H6L3 3.500Z" fill="#4a6fae" /></svg>
          <svg class="q3" viewBox="0 0 32 32" v-html="big.folderR"></svg>
        </div>
        <svg class="qmore" viewBox="0 0 6 7"><path d="M0 0H6V1.500H0ZM0 3H6L3 6.500Z" fill="#1f3f86" /></svg>
        <div class="caps">
          <svg viewBox="0 0 12 12"><path d="M0 5.500H12" stroke="#000" /></svg>
          <svg viewBox="0 0 12 12"><path d="M.5 2.500H9.500V11.500H.5ZM2.500 2V.5H11.500V9.500H10" fill="none" stroke="#000" /></svg>
          <div class="close"><svg viewBox="0 0 12 12"><path d="M.5.5 11.500 11.500M11.500.5.5 11.500" stroke="#fff" stroke-width="1.200" /></svg></div>
        </div>
      </header>
      <nav class="tabs">
        <span class="tab on">File</span><span class="tab t2">Tools</span><span class="tab t3">Bentley Cloud Services</span><span class="tab t4">Help</span>
        <svg class="bin" viewBox="0 0 16 16" v-html="binoc"></svg>
        <svg class="tri tabtri" viewBox="0 0 6 4"><path d="M0 0H6L3 3.500Z" fill="#4a6fae" /></svg>
      </nav>
      <div class="ribbon">
        <div v-for="g in groups" :key="g.name" class="group" :style="{ width: g.w + 'px' }">
          <div class="gitems">
            <div v-for="it in g.items" :key="it.t" class="gitem" :style="{ width: it.w + 'px' }">
              <svg viewBox="0 0 32 32" v-html="big[it.i]"></svg>
              <span>{{ it.t }}</span>
              <span v-if="it.t2">{{ it.t2 }}</span>
              <i v-if="it.a"></i>
            </div>
          </div>
          <div class="gname">{{ g.name }}</div>
        </div>
      </div>
      <div class="bars">
        <div v-for="(r, k) in toolbars" :key="k" class="bar">
          <div class="grip"></div>
          <svg v-for="(n, j) in r" :key="j" viewBox="0 0 16 16" v-html="glyphs[n]"></svg>
          <div class="more"><svg viewBox="0 0 6 7"><path d="M0 0H6V1.500H0ZM0 3H6L3 6.500Z" fill="#fff" stroke="#5c7fc0" stroke-width=".4" /></svg></div>
        </div>
      </div>
      <main class="view">
        <div class="vrow">
          <div class="canvas">
            <svg class="axes" viewBox="0 0 100 75">
              <g stroke-width="3.500"><path d="M47 46 16 28" stroke="#8e8a1a" stroke-width="2.500" /><path d="M47 46 33 54" stroke="#4444f8" stroke-width="3" /><path d="M47 46V27" stroke="#2fa84a" stroke-width="2.500" /><path d="M47 46 62 55" stroke="#a02020" stroke-width="2.500" /></g>
              <path d="M15 23 18 32 12 31Z" fill="#5a5608" stroke="#5a5608" stroke-width="2.500" />
              <path d="M1 19.500 16 23 11 30Z" fill="#ffff50" /><path d="M47.500 12 53 27Q48 30 42 27Z" fill="#4cff4c" /><path d="M47.500 12 44 27 42 27Z" fill="#157a25" />
              <path d="M18 62 23 53Q29 49 33 54L34 60Z" fill="#4c4cff" /><path d="M77 62 66 52Q61 50 60 60Z" fill="#ff4c4c" />
              <g font-family="DejaVu Sans" font-size="9" fill="#000"><text x="2" y="15.500">N</text><text x="46.500" y="8">Z</text><text x="13.500" y="61">X</text><text x="80" y="61">Y</text></g>
            </svg>
            <svg class="cross" viewBox="0 0 21 21"><rect x=".5" y=".5" width="20" height="20" fill="none" stroke="#333" /><path d="M10.500 3.500V17.500M3.500 10.500H17.500" stroke="#333" /></svg>
            <svg class="cursor" viewBox="0 0 13 21"><path d="M.7.700V17L4.500 13.500 7.200 19.700 9.700 18.600 7 12.500H12Z" fill="#fff" stroke="#000" stroke-width="1" /></svg>
          </div>
          <div class="vscroll">
            <svg viewBox="0 0 10 6"><path d="M.8 5.200 5 1 9.200 5.200" fill="none" stroke="#555" stroke-width="1.800" /></svg>
            <div class="thumb"></div>
            <svg viewBox="0 0 10 6"><path d="M.8.8 5 5 9.200.8" fill="none" stroke="#555" stroke-width="1.800" /></svg>
          </div>
        </div>
        <div class="hscroll">
          <svg viewBox="0 0 6 10"><path d="M5.200.8 1 5 5.200 9.200" fill="none" stroke="#555" stroke-width="1.800" /></svg>
          <svg viewBox="0 0 6 10"><path d="M.8.8 5 5 .8 9.200" fill="none" stroke="#555" stroke-width="1.800" /></svg>
        </div>
      </main>
      <footer class="status"><div class="cmd">Command :</div><div class="panes"><i class="p1"></i><i class="p2"></i><i class="p3"></i><i class="p4"></i></div></footer>

      <div class="taskbar">
        <div class="start"><svg viewBox="0 0 20 20"><path :d="winLogo" fill="#fff" /></svg></div>
        <div class="tsearch">
          <div class="ring"></div><span>Type here to search</span>
          <svg viewBox="0 0 15 20"><rect x="4" y=".7" width="7" height="13" rx="1.500" fill="none" stroke="#333" stroke-width="1.300" /><path d="M.8 10V12Q1 16.500 5 16.500H10Q14 16.500 14.200 12V10M7.500 16.500V19.300M4 19.300H11" fill="none" stroke="#333" stroke-width="1.300" /></svg>
        </div>
        <div class="apps">
          <div v-for="a in taskItems" :key="a.i" class="app" :class="{ act: a.act, alert: a.alert }">
            <svg viewBox="0 0 30 30" v-html="apps[a.i]"></svg>
            <div v-if="a.on" class="ul" :class="{ two: a.on === 2 }"></div>
          </div>
        </div>
        <div class="tray">
          <svg class="tp" viewBox="0 0 18 20"><g fill="none" stroke="#fff" stroke-width="1.400"><circle cx="12.500" cy="4" r="3.200" /><path d="M8.500 11.500Q9 8 12.500 8T17.300 12" /><circle cx="5.500" cy="11" r="3.200" /><path d="M.8 19.500Q1 14.500 5.500 14.500T10 19.500" /></g></svg>
          <svg class="tu" viewBox="0 0 16 9"><path d="M.6 8.300 8 1 15.400 8.300" fill="none" stroke="#fff" stroke-width="1.300" /></svg>
          <svg class="tb" viewBox="0 0 20 14"><rect x="4.500" y="4" width="12.500" height="7" fill="#fff" /><path d="M3 2.500H18.500V12.500H3V9M19.500 6V9" fill="none" stroke="#fff" /><path d="M0 3H5.500V6H4V8H1.500V6H0ZM1 0H2V3H1ZM3.500 0H4.500V3H3.500Z" fill="#fff" /></svg>
          <svg class="tw" viewBox="0 0 16 16"><g fill="none" stroke="#ddd" stroke-width="1.300"><path d="M1 15Q1 1 15 1" opacity=".7" /><path d="M4.500 15Q5 5 15 5" /><path d="M8 15Q8.500 9 15 9" /></g><circle cx="13" cy="14" r="1.700" fill="#fff" /></svg>
          <svg class="tv" viewBox="0 0 21 18"><path d="M.7 6H3.500L7.500 2.500V15.500L3.500 12H.7Z" fill="none" stroke="#fff" stroke-width="1.200" /><path d="M10.500 7Q12 9 10.500 11" fill="none" stroke="#fff" stroke-width="1.200" /><path d="M13 4.500Q16 9 13 13.500M16 1.500Q21.500 9 16 16.500" fill="none" stroke="#888" stroke-width="1.200" /></svg>
          <div class="clock"><span>3:35 PM</span><span>9/26/2019</span></div>
          <div class="note"><svg viewBox="0 0 20 20"><path d="M0 0H20V16H12L8 20V16H0Z" fill="#fff" /><path d="M4 5H16M4 8.500H16M4 12H12" stroke="#222" /></svg><b>1</b></div>
          <div class="peek"></div>
        </div>
      </div>

      <svg class="orb" viewBox="0 0 38 38">
        <circle cx="19" cy="19" r="18" fill="#dfe4ea" stroke="#8d939c" /><circle cx="19" cy="19" r="16" fill="#c3c9d1" /><ellipse cx="19" cy="11" rx="14" ry="8.500" fill="#f7f8fa" /><circle cx="19" cy="19" r="14" fill="#9ec3e6" opacity=".5" />
        <g transform="translate(6 7) scale(.83)" v-html="autopipe"></g>
      </svg>
      <div class="player">
        <svg viewBox="0 0 30 30" v-html="apps.gear"></svg><i></i><b class="pa"></b><b class="pb"></b><b class="stop"></b>
      </div>
      <div class="tip">
        <span class="l1">QA326B.NTL checkpoint. Verifying...</span>
        <div class="prog"><div></div></div>
        <span class="l2">ImportExport-PXF_DTP</span>
        <svg viewBox="0 0 8 9"><path d="M.5 8.500H.7L6.500 1V8.500" fill="#fff" stroke="#646464" /><path d="M1.500 8.500H6V9H1Z" fill="#fff" /></svg>
      </div>

      <div class="dlg search">
        <div class="dtitle"><svg class="di" viewBox="0 0 16 16" v-html="binoc"></svg><span>Command Search Utility</span><svg class="dx" viewBox="0 0 12 12"><path d="M.5.5 11.500 11.500M11.500.5.5 11.500" stroke="#777" /></svg></div>
        <div class="sbody"><label>Search:</label><div class="combo"><div class="cb"><svg viewBox="0 0 8 5"><path d="M0 0H8L4 4.500Z" /></svg></div></div></div>
      </div>

      <div class="dlg review">
        <div class="dtitle">
          <svg class="ri" viewBox="0 0 19 15"><rect x=".5" y=".5" width="18" height="14" fill="#f4f6f8" stroke="#9aa1a8" /><rect x="2" y="2.500" width="7.500" height="10" fill="#3f8a80" /><rect x="15.500" y="2.500" width="2" height="6" fill="#4a86b0" /></svg>
          <span>Review Component Data</span>
          <div class="rc">
            <svg viewBox="0 0 12 12"><path d="M0 5.500H12" stroke="#888" /></svg>
            <svg viewBox="0 0 12 12"><rect x=".5" y=".5" width="11" height="11" fill="none" stroke="#e4e4e4" /></svg>
            <svg viewBox="0 0 12 12"><path d="M.5.5 11.500 11.500M11.500.5.5 11.500" stroke="#777" /></svg>
          </div>
        </div>
        <div class="sheet">
          <div class="grid">
            <div class="cols"><div v-for="(c, k) in gridCols" :key="k" class="col" :class="{ top: c[0].startsWith('Case') }" :style="{ width: c[1] + 'px' }">{{ c[0] }}</div></div>
            <div class="vs"><div class="btn"><svg viewBox="0 0 10 6"><path d="M0 5.500H10L5 .5Z" /></svg></div><div class="btn grow"></div><div class="btn last"><svg viewBox="0 0 10 6"><path d="M0 .5H10L5 5.500Z" /></svg></div></div>
          </div>
          <div class="srow">
            <div class="nb"><svg viewBox="0 0 12 10"><path d="M2 0V10" stroke="#666" stroke-width="1.400" /><path d="M9 0V10L4 5Z" fill="#666" /></svg></div>
            <div class="nb"><svg viewBox="0 0 12 10"><path d="M8 0V10L3 5Z" fill="#666" /></svg></div>
            <div class="nb"><svg viewBox="0 0 12 10"><path d="M4 0V10L9 5Z" /></svg></div>
            <div class="nb"><svg viewBox="0 0 12 10"><path d="M2 0V10L7 5Z" /><path d="M9 0V10" stroke="#000" stroke-width="1.400" /></svg></div>
            <div class="stabs">
              <svg class="lead" viewBox="0 0 8 21"><path d="M0 0V21H7Z" fill="#c0c0c0" /><path d="M1 0 7.500 20.500" stroke="#000" stroke-width="1.200" /></svg>
              <div v-for="(t, k) in sheetTabs" :key="t[0]" class="stab" :class="{ on: k === 0 }" :style="{ width: t[1] + 'px' }"><span>{{ t[0] }}</span><svg v-if="k < 8" viewBox="0 0 9 21"><path d="M1 20.500 4.500 9 8.500 20.500Z" fill="#c0c0c0" /><path d="M1 20.500 7 .5M4.500 9 8.500 20.500" fill="none" stroke="#000" stroke-width="1.200" /></svg></div>
            </div>
            <div class="hs"><div class="btn"><svg viewBox="0 0 6 10"><path d="M6 0V10L0 5Z" /></svg></div><div class="btn grow"></div><div class="btn"><svg viewBox="0 0 6 10"><path d="M0 0V10L6 5Z" /></svg></div></div>
          </div>
        </div>
      </div>
    </section>

    <section class="right">
      <div class="etitle">
        <svg class="e1" viewBox="0 0 16 16" v-html="ex.folder"></svg><i></i>
        <svg class="e2" viewBox="0 0 13 15"><path d="M.5.5H12.500V14.500H.5Z" fill="#fafafa" stroke="#888" /><path d="M3 7.500 5.500 10.500 10.500 4" fill="none" stroke="#e8622a" stroke-width="1.800" /></svg>
        <svg class="e3" viewBox="0 0 16 16" v-html="ex.folder"></svg>
        <svg class="e4" viewBox="0 0 7 7"><path d="M0 0H7V1H0ZM0 2.800H7L3.500 6.500Z" /></svg><i></i>
        <span>Discrepencies9_26_2019</span>
        <div class="ecaps">
          <svg viewBox="0 0 12 12"><path d="M1 6.500H11" stroke="#777" /></svg>
          <svg viewBox="0 0 12 12"><path d="M1.500 3.500H8.500V10.500H1.500ZM3.500 3V1.500H10.500V8.500H9" fill="none" stroke="#777" /></svg>
          <svg viewBox="0 0 12 12"><path d="M1 1 11 11M11 1 1 11" stroke="#777" /></svg>
        </div>
      </div>
      <div class="etabs"><span class="ef">File</span><span class="eh">Home</span><span class="es">Share</span><span class="ev">View</span>
        <svg class="echev" viewBox="0 0 9 6"><path d="M.7.7 4.500 4.700 8.300.7" fill="none" stroke="#888" stroke-width="1.300" /></svg><b class="help">?</b></div>
      <div class="enav">
        <svg class="n1" viewBox="0 0 14 12"><path d="M13 6H1.500M6 1 1 6 6 11" fill="none" stroke="#6a6a6a" stroke-width="1.700" /></svg>
        <svg class="n2" viewBox="0 0 14 12"><path d="M1 6H12.500M8 1 13 6 8 11" fill="none" stroke="#cfcfcf" stroke-width="1.500" /></svg>
        <svg class="n3" viewBox="0 0 8 6"><path d="M1 1 4 4.300 7 1" fill="none" stroke="#777" stroke-width="1.400" /></svg>
        <svg class="n4" viewBox="0 0 12 13"><path d="M6 13V1.500M1 6.500 6 1.200 11 6.500" fill="none" stroke="#6a6a6a" stroke-width="1.700" /></svg>
        <div class="addr">
          <svg class="af" viewBox="0 0 16 16" v-html="ex.folder"></svg><svg class="sep s0" viewBox="0 0 5 8"><path d="M.7.7 4 4 .7 7.300" fill="none" stroke="#666" stroke-width="1.300" /></svg>
          <div v-for="(c, k) in crumbs" :key="c[0]" class="crumb" :style="{ width: c[1] + 'px' }"><span>{{ c[0] }}</span><svg v-if="k < 10" class="sep" viewBox="0 0 5 8"><path d="M.7.7 4 4 .7 7.300" fill="none" stroke="#666" stroke-width="1.300" /></svg></div>
          <svg class="ad" viewBox="0 0 9 6"><path d="M.7.7 4.500 4.700 8.300.7" fill="none" stroke="#555" stroke-width="1.600" /></svg>
          <div class="rf"><svg viewBox="0 0 12 12"><path d="M8.500 2.200A4.500 4.500 0 1 1 3.500 2.500M3.500 0V3.500H7" fill="none" stroke="#555" stroke-width="1.200" /></svg></div>
        </div>
        <div class="esearch"><span>Search Discrepencies9_26_2019</span><svg viewBox="0 0 12 12"><circle cx="7.500" cy="4.500" r="3.500" fill="none" stroke="#555" stroke-width="1.200" /><path d="M5 7 1 11" stroke="#555" stroke-width="1.500" /></svg></div>
      </div>
      <div class="ebody">
        <div class="tree">
          <div v-for="(n, k) in tree" :key="k" class="node" :class="{ root: n.root, sel: n.sel, gap: n.root && n.i !== 'star' }">
            <svg viewBox="0 0 16 16" v-html="ex[n.i]"></svg><span>{{ n.t }}</span>
            <svg v-if="n.pin" class="pin" viewBox="0 0 11 11"><path d="M6.500 0 11 4.500 9.500 5 7.500 7 7 9.500 4.800 7.300 1 11 0 10 3.700 6.200 1.500 4 4 3.500 6 1.500Z" fill="#8a9299" /></svg>
          </div>
        </div>
        <div class="list">
          <div class="lh"><span class="c1">Name<svg viewBox="0 0 9 5"><path d="M.5 4.500 4.500.8 8.500 4.500" fill="none" stroke="#777" /></svg></span><span class="c2">Date modified</span><span class="c3">Type</span><span class="c4">Size</span></div>
          <div class="lr"><svg viewBox="0 0 16 16" v-html="ex.folder"></svg><span class="r1">DistributedLoad_DTP</span><span class="r2">9/26/2019 3:00 PM</span><span class="r3">File folder</span></div>
        </div>
      </div>
      <div class="estatus">
        <span class="x1">1 item</span><i></i><span class="x2">State:</span>
        <svg viewBox="0 0 16 16"><circle cx="8" cy="8" r="8" fill="#44b02a" /><path d="M4 7.500Q5 4 8.500 4 10.500 4 11.500 6M12 8.500Q11 12 7.500 12 5.500 12 4.500 10" fill="none" stroke="#ffffd0" stroke-width="1.600" /><path d="M12.800 4V7.500H9.500ZM3.200 12V8.500H6.500Z" fill="#ffffd0" /></svg>
        <span class="x3">Online</span><i></i>
        <div class="vmodes"><svg viewBox="0 0 22 18"><rect x=".5" y=".5" width="21" height="17" fill="#cce8ff" stroke="#66b8f0" /><path d="M4 5.500H7M4 9H7M4 12.500H7M8.500 5.500H12M8.500 9H12M8.500 12.500H12M13.500 5.500H18M13.500 9H18M13.500 12.500H18" stroke="#456" /></svg><svg viewBox="0 0 22 18"><rect x="4.500" y="3.500" width="13" height="11" fill="#fff" stroke="#777" /><rect x="6" y="5" width="10" height="6" fill="#8cc4e8" /></svg></div>
      </div>
      <div class="taskbar rt">
        <div class="start"><svg viewBox="0 0 20 20"><path :d="winLogo" fill="#fff" /></svg></div>
        <div class="rring"><b></b></div>
        <div class="apps">
          <div v-for="a in taskItems" :key="a.i" class="app" :class="{ act: a.act, alert: a.alert }">
            <svg viewBox="0 0 30 30" v-html="apps[a.i]"></svg>
            <div v-if="a.on" class="ul" :class="{ two: a.on === 2 }"></div>
          </div>
        </div>
        <div class="rclock"><span>3:35 PM</span><span>9/26/2019</span></div>
      </div>
    </section>
  </div>
</template>

<style>
body { overflow: hidden; }
</style>

<style scoped>
.desktop { width: 3840px; height: 1080px; display: flex; overflow: hidden; font-family: "Noto Sans", "Open Sans", sans-serif; background: #fff; }
.desktop * { box-sizing: border-box; }
svg { display: block; flex: none; overflow: visible; }
span, label { white-space: nowrap; }
.left, .right { width: 1920px; height: 1080px; display: flex; flex-direction: column; position: relative; overflow: hidden; flex: none; }

.titlebar { height: 30px; flex: none; display: flex; background: #fff; }
.qat { margin-left: 38px; margin-top: 2px; width: 120px; height: 26px; flex: none; border: 1px solid #a9adb5; border-left: 0; border-radius: 0 13px 13px 0; background: linear-gradient(#fff, #e7ebf1); display: flex; }
.q1 { width: 16px; height: 16px; margin-left: 14px; }
.q2 { width: 16px; height: 16px; margin-left: 14px; }
.tri { width: 6px; height: 4px; }
.qat .tri { margin: 10px 6px 0 13px; }
.q3 { width: 16px; height: 16px; }
.qmore { width: 6px; height: 7px; margin: 10px 0 0 9px; }
.caps { margin-left: auto; display: flex; height: 28px; margin-right: 2px; }
.caps svg { width: 12px; height: 12px; margin-top: 8px; margin-right: 46px; }
.caps svg:nth-child(2) { margin-right: 25px; }
.close { width: 58px; height: 28px; background: #e81123; }
.caps .close svg { margin: 8px 0 0 22px; }

.tabs { height: 21px; flex: none; background: #bfdbff; display: flex; font-size: 11px; color: #15428b; line-height: 23px; }
.tab.on { margin: 1px 0 0 49px; width: 41px; height: 21px; text-align: center; line-height: 21px; background: linear-gradient(#fff, #e6eefa); border: 1px solid #8db2e3; border-bottom: 0; border-radius: 3px 3px 0 0; z-index: 1; padding-right: 1px; }
.t2 { width: 56px; padding-left: 16px; }
.t3 { width: 145px; padding-left: 16px; }
.t4 { padding-left: 16px; }
.bin { width: 15px; height: 14px; margin: 3px 106px 0 auto; }
.tabtri { margin: 9px 3px 0 0; }
.ribbon { height: 91px; flex: none; margin: 0 1px 0 1px; padding: 2px 0 0 3px; display: flex; gap: 3px; border: 1px solid #8db2e3; border-bottom-color: #84c8d4; border-radius: 4px; background: linear-gradient(#dfe9f5 0, #cfddef 17px, #c7d7ee 18px, #c7d7ee 29px, #d9e8f6 70px, #e3f5ff 85px); box-shadow: 0 0 0 1px #bfdbff; }
.group { height: 85px; flex: none; border: 1px solid #9fbfe0; border-radius: 3px; background: linear-gradient(#dfe8f4 0, #d3e0f0 14px, #c8d8ee 15px, #c8d8ee 26px, #dde9f7 68px); display: flex; flex-direction: column; box-shadow: 1px 1px 0 #eef6fd; }
.gitems { display: flex; height: 68px; padding: 4px 0 0 3px; }
.group:nth-child(3) .gitems, .group:nth-child(4) .gitems { padding-left: 0; }
.group:nth-child(5) .gitems { padding-left: 3px; }
.gitem { display: flex; flex-direction: column; align-items: center; font-size: 11px; line-height: 13px; color: #15428b; letter-spacing: -.1px; }
.gitem svg { width: 32px; height: 32px; margin-bottom: 4px; }
.gitem i { width: 0; height: 0; border: 3px solid transparent; border-top: 3.500px solid #4a78b8; border-bottom: 0; margin-top: 4px; }
.gname { height: 15px; background: #c1d8f0; text-align: center; font-size: 11px; line-height: 16px; color: #3e6aaa; white-space: nowrap; letter-spacing: -.1px; }

.bars { height: 80px; flex: none; background: #bfdbff; padding-top: 2px; display: flex; flex-direction: column; gap: 1px; align-items: flex-start; }
.bar { height: 25px; display: flex; align-items: center; background: linear-gradient(#e8f1fe, #d3e3fb 60%, #bcd3f7); border-radius: 3px 4px 4px 3px; border-bottom: 1px solid #6f9ad6; }
.grip { width: 13px; height: 16px; background: radial-gradient(circle at 5px 2px, #7d9fd4 1.300px, transparent 1.500px); background-size: 13px 4px; }
.bar > svg { width: 16px; height: 16px; margin-right: 6px; }
.more { width: 10px; height: 25px; background: linear-gradient(#b9d2f8, #6d95d6); border-radius: 0 4px 4px 0; padding: 16px 0 0 2px; }
.more svg { width: 6px; height: 7px; }

.view { flex: none; height: 784px; border: 1px solid #606060; background: #fff; display: flex; flex-direction: column; }
.vrow { height: 762px; display: flex; }
.canvas { width: 1897px; border: 2px solid #ffff00; background: #fdfdfd; flex: none; position: relative; }
.axes { position: absolute; left: 28px; top: 636px; width: 100px; height: 75px; }
.cross { position: absolute; left: 701px; top: 374px; width: 21px; height: 21px; }
.cursor { position: absolute; left: 964px; top: 359px; width: 13px; height: 21px; }
.vscroll { width: 20px; margin-left: 1px; background: #f0f0f0; display: flex; flex-direction: column; align-items: center; }
.vscroll svg { width: 10px; height: 6px; margin-top: 7px; }
.vscroll svg:last-child { margin: auto 0 8px; }
.thumb { width: 20px; height: 21px; background: #cdcdcd; margin-top: 357px; }
.hscroll { height: 20px; background: #f0f0f0; display: flex; align-items: center; justify-content: space-between; padding: 0 28px 0 7px; }
.hscroll svg { width: 6px; height: 10px; }
.status { height: 24px; flex: none; display: flex; font-size: 11px; color: #15428b; border-top: 1px solid #6b93cf; }
.cmd { width: 514px; background: linear-gradient(#e0edfc 0, #cfe1f9 6px, #b0cdf3 7px, #c5dbf8); padding-left: 9px; line-height: 21px; }
.panes { flex: 1; background: linear-gradient(#d0e3fb 0, #a9c7f0 6px, #8fb4e8 7px, #82a5da); display: flex; align-items: center; }
.panes i { width: 1px; height: 16px; background: #eaf2fc; }
.p1 { margin-left: 1043px; } .p2 { margin-left: 72px; } .p3 { margin-left: 48px; } .p4 { margin-left: 120px; }

.taskbar { height: 50px; flex: none; display: flex; background: linear-gradient(90deg, #1e2927 0, #363636 500px, #353535 1650px, #1e2927 1760px); }
.start { width: 60px; display: flex; align-items: center; justify-content: center; background: #1e2927; }
.start svg { width: 20px; height: 20px; }
.tsearch { width: 430px; background: #f2f2f2; border-top: 1px solid #bbb; display: flex; align-items: center; flex: none; }
.ring { width: 27px; height: 27px; margin-left: 12px; border: 3.500px solid #000; border-radius: 50%; }
.tsearch span { margin-left: 11px; font-size: 18px; color: #333; letter-spacing: -.7px; width: 343px; margin-top: -1px; }
.tsearch svg { width: 15px; height: 20px; margin-left: 4px; }
.apps { display: flex; }
.app { width: 62px; display: flex; flex-direction: column; align-items: center; padding-top: 10px; }
.app svg { width: 30px; height: 30px; }
.ul { width: 51px; height: 3px; background: #76b9ed; margin-top: 7px; }
.ul.two { border-right: 10px solid #5a8bb3; }
.app.act { background: #5e5e5e; width: 61px; margin-right: 1px; }
.app.act .ul { width: 61px; }
.app.alert { background: linear-gradient(#926544 47px, #ff7010 47px); width: 61px; }
.tray { margin-left: auto; display: flex; align-items: center; }
.tp { width: 18px; height: 20px; margin-right: 28px; }
.tu { width: 16px; height: 9px; margin-right: 12px; }
.tb { width: 20px; height: 14px; margin-right: 13px; }
.tw { width: 16px; height: 16px; margin-right: 11px; }
.tv { width: 21px; height: 18px; margin-right: 5px; }
.clock { width: 84px; display: flex; flex-direction: column; align-items: center; font-size: 15px; line-height: 23px; color: #fff; letter-spacing: -.4px; margin-right: 14px; margin-top: -1px; }
.note { width: 30px; height: 30px; position: relative; margin-right: 15px; }
.note svg { width: 20px; height: 20px; }
.note b { position: absolute; left: 9px; top: 9px; width: 21px; height: 21px; border-radius: 50%; border: 1px solid #999; background: #333; color: #fff; font: 14px/19px "Noto Sans", sans-serif; text-align: center; }
.peek { width: 6px; height: 50px; border-left: 1px solid #8a8a8a; }

.orb { position: absolute; left: 3px; top: 0; width: 38px; height: 38px; }
.player { position: absolute; left: 1808px; top: 24px; width: 103px; height: 41px; background: #f0f0f0; border: 1px solid #b3aea9; border-radius: 4px; display: flex; align-items: center; padding: 0 0 1px 3px; }
.player svg { width: 32px; height: 32px; border: 2px solid #1b3a54; background: #4fe3ee; }
.player i { width: 1px; height: 35px; background: #a9a4a0; margin: 0 9px 0 4px; }
.player b { width: 7px; height: 16px; background: #00a8ff; margin-right: 2px; }
.player .stop { width: 16px; margin-left: 8px; }
.tip { position: absolute; left: 1691px; top: 68px; width: 220px; height: 55px; background: #fff; border: 1px solid #646464; padding: 3px 6px 0 3px; display: flex; flex-direction: column; align-items: flex-end; font-size: 12px; line-height: 17px; color: #000; }
.tip span { letter-spacing: .16px; }
.prog { width: 212px; height: 11px; border: 1px solid #b8b8b8; background: #e6e6e6; padding: 2px 1px 2px 2px; margin: 0 -3px 0 0; }
.prog div { height: 5px; background: repeating-linear-gradient(90deg, #06b025 0 5px, #e6e6e6 5px 6px); }
.tip svg { position: absolute; right: 4px; top: -8px; width: 8px; height: 9px; }

.dlg { position: absolute; background: #f0f0f0; border: 1px solid #9a9a9a; box-shadow: 0 4px 14px rgba(0, 0, 0, .35); display: flex; flex-direction: column; }
.dtitle { height: 37px; flex: none; background: #fff; display: flex; align-items: center; color: #999; font-size: 15px; }
.search { left: 942px; top: 174px; width: 578px; height: 85px; }
.di { width: 18px; height: 17px; margin-left: 10px; }
.dtitle span { margin-top: -1px; }
.search .dtitle span { margin-left: 7px; letter-spacing: -.5px; }
.dx { width: 12px; height: 12px; margin: 0 15px 0 auto; }
.sbody { display: flex; font: 13.300px "Liberation Sans", sans-serif; padding: 8px 0 0 8px; }
.sbody label { width: 54px; padding-top: 5px; color: #000; }
.combo { width: 501px; height: 27px; background: #fff; border: 2px solid #6d6d6d; border-right-color: #ddd; border-bottom-color: #e3e3e3; display: flex; justify-content: flex-end; }
.cb { width: 20px; background: #f0f0f0; border: 1px solid #fff; border-right: 2px solid #696969; border-bottom: 2px solid #696969; display: flex; align-items: center; justify-content: center; }
.cb svg { width: 8px; height: 5px; }

.review { left: 514px; top: 768px; width: 1012px; height: 262px; }
.ri { width: 19px; height: 15px; margin-left: 9px; }
.review .dtitle span { margin-left: 6px; letter-spacing: -.4px; }
.rc { margin-left: auto; display: flex; gap: 46px; margin-right: 24px; }
.rc svg { width: 12px; height: 12px; }
.sheet { margin: 14px 0 0 14px; width: 989px; height: 202px; border: 1px solid #696969; border-top-width: 2px; display: flex; flex-direction: column; }
.grid { height: 178px; display: flex; justify-content: space-between; }
.cols { display: flex; height: 66px; }
.col { flex: none; height: 66px; border-right: 2px solid #222; border-bottom: 2px solid #222; border-left: 1px solid #fff; border-top: 1px solid #fff; text-align: center; font: bold 13.300px/16px "Liberation Sans", sans-serif; white-space: pre; padding-top: 23px; letter-spacing: .1px; display: flex; justify-content: center; overflow: hidden; color: #000; }
.col.top { padding-top: 7px; }
.vs { width: 21px; display: flex; flex-direction: column; }
.btn { width: 19px; height: 19px; border: 1px solid #fff; border-right-color: #888; border-bottom-color: #888; display: flex; align-items: center; justify-content: center; flex: none; }
.vs .btn.grow { height: auto; flex: 1; margin: 1px 0 2px; }
.vs svg { width: 10px; height: 6px; }
.srow { height: 21px; display: flex; }
.nb { width: 21px; height: 20px; border: 1px solid #fff; border-right: 2px solid #777; border-bottom: 1px solid #333; display: flex; align-items: center; justify-content: center; flex: none; }
.nb svg { width: 12px; height: 10px; }
.stabs { display: flex; width: 785px; overflow: hidden; border-top: 1px solid #000; border-right: 1px solid #000; border-bottom: 1px solid #444; flex: none; }
.lead { width: 8px; height: 21px; margin: -1px 0 0 0; background: #fff; }
.stab { display: flex; align-items: center; flex: none; justify-content: space-between; font: 16.200px "Liberation Sans", sans-serif; color: #000; margin-top: -1px; }
.stab.on { background: #fff; font-weight: bold; font-size: 15.900px; }
.stab span { padding-left: 4px; }
.stab.on span { padding-left: 3px; }
.stab svg { width: 9px; height: 21px; }
.hs { margin-left: 3px; display: flex; width: 95px; gap: 1px; flex: none; }
.hs .grow { width: auto; flex: 1; margin-right: 2px; }
.hs svg { width: 6px; height: 10px; }

.right { background: #fff; font-size: 12px; color: #000; letter-spacing: -.35px; }
.etitle { height: 23px; display: flex; align-items: center; color: #999; flex: none; }
.etitle i { width: 1px; height: 12px; background: #999; }
.e1 { width: 15px; height: 15px; margin: 0 8px 0 0; }
.e2 { width: 13px; height: 15px; margin: 0 8px 0 11px; }
.e3 { width: 15px; height: 15px; margin-right: 7px; }
.e4 { width: 7px; height: 7px; margin: 4px 8px 0 1px; }
.etitle span { margin-left: 8px; }
.ecaps { margin-left: auto; display: flex; gap: 34px; margin-right: 19px; }
.ecaps svg { width: 12px; height: 12px; margin-top: -3px; }
.etabs { height: 24px; border-bottom: 1px solid #dadbdc; display: flex; line-height: 24px; color: #333; flex: none; }
.ef { width: 56px; background: #0063b1; color: #fff; text-align: center; }
.eh { width: 59px; padding-left: 14px; } .es { width: 58px; padding-left: 14px; } .ev { padding-left: 14px; }
.echev { width: 9px; height: 6px; margin: 9px 10px 0 auto; }
.help { width: 14px; height: 14px; border-radius: 7px; background: #0a73d0; color: #fff; font-size: 11px; line-height: 14px; text-align: center; margin: 4px 5px 0 0; }
.enav { height: 35px; display: flex; align-items: center; flex: none; }
.n1 { width: 13px; height: 12px; margin-left: 13px; } .n2 { width: 13px; height: 12px; margin-left: 17px; } .n3 { width: 8px; height: 6px; margin-left: 13px; } .n4 { width: 12px; height: 13px; margin-left: 10px; }
.addr { width: 1588px; height: 22px; border: 1px solid #d9d9d9; margin-left: 7px; display: flex; align-items: center; line-height: 20px; flex: none; }
.af { width: 15px; height: 15px; margin: -2px 0 0 2px; }
.sep { width: 5px; height: 8px; }
.s0 { margin: 0 10px 0 7px; }
.crumb { display: flex; align-items: center; justify-content: space-between; padding-right: 9px; flex: none; }
.ad { width: 9px; height: 6px; margin: 0 3px 0 auto; }
.rf { width: 17px; height: 20px; border-left: 1px solid #e3e3e3; padding: 4px 0 0 3px; }
.rf svg { width: 12px; height: 12px; }
.esearch { width: 202px; height: 22px; border: 1px solid #d9d9d9; margin-left: 12px; padding: 0 9px 0 8px; color: #707070; display: flex; align-items: center; justify-content: space-between; letter-spacing: -.5px; flex: none; }
.esearch svg { width: 12px; height: 12px; }
.ebody { height: 936px; display: flex; flex: none; }
.tree { width: 309px; padding-top: 16px; border-right: 1px solid #f0f0f0; }
.node { height: 24px; width: 306px; display: flex; align-items: center; padding-left: 32px; }
.node.root { padding-left: 24px; }
.node.gap { margin-top: 8px; }
.node svg { width: 16px; height: 16px; }
.node span { margin: -1px 0 0 5px; }
.node .pin { width: 11px; height: 11px; margin: 0 2px 0 auto; }
.node.sel { background: #d9d9d9; }
.lh { display: flex; height: 25px; line-height: 26px; color: #4c607a; }
.lh span { border-right: 1px solid #e5e5e5; padding-left: 6px; }
.lh .c1 { width: 341px; padding-left: 18px; display: flex; }
.c1 svg { width: 9px; height: 5px; margin: 0 0 0 123px; }
.c2, .c3 { width: 150px; } .c4 { width: 100px; }
.lr { display: flex; height: 24px; margin-top: 4px; align-items: center; color: #6d6d6d; }
.lr svg { width: 16px; height: 16px; margin: -1px 5px 0 18px; }
.r1 { width: 308px; color: #000; } .r2 { width: 150px; }
.estatus { height: 22px; display: flex; align-items: center; color: #1e395b; flex: none; }
.estatus i { width: 1px; height: 12px; background: #e0e0e0; }
.x1 { width: 44px; margin-left: 14px; } .x2 { margin-left: 9px; width: 30px; } .x3 { margin-left: 3px; width: 43px; }
.estatus > svg { width: 16px; height: 16px; }
.vmodes { margin-left: auto; display: flex; margin-right: 5px; gap: 3px; }
.vmodes svg { width: 22px; height: 18px; }
.rt { height: 40px; background: #1e2927; }
.rt .start { width: 48px; padding-right: 0; }
.rt .start svg { width: 16px; height: 16px; }
.rring { width: 48px; display: flex; align-items: center; justify-content: center; }
.rring b { width: 16px; height: 16px; border: 2px solid #fff; border-radius: 50%; }
.rt .app { width: 49px; padding-top: 8px; }
.rt .app svg { width: 24px; height: 24px; }
.rt .ul { width: 40px; height: 2px; margin-top: 6px; }
.rt .ul.two { border-right-width: 8px; }
.rt .app.act { width: 48px; background: #4a5453; }
.rt .app.act .ul { width: 48px; }
.rt .app.alert { width: 48px; background: linear-gradient(#8a5e3c 38px, #ff7010 38px); }
.rclock { margin-left: auto; width: 66px; display: flex; flex-direction: column; align-items: center; font-size: 12px; line-height: 17px; color: #fff; padding-top: 4px; margin-right: 4px; }
</style>
